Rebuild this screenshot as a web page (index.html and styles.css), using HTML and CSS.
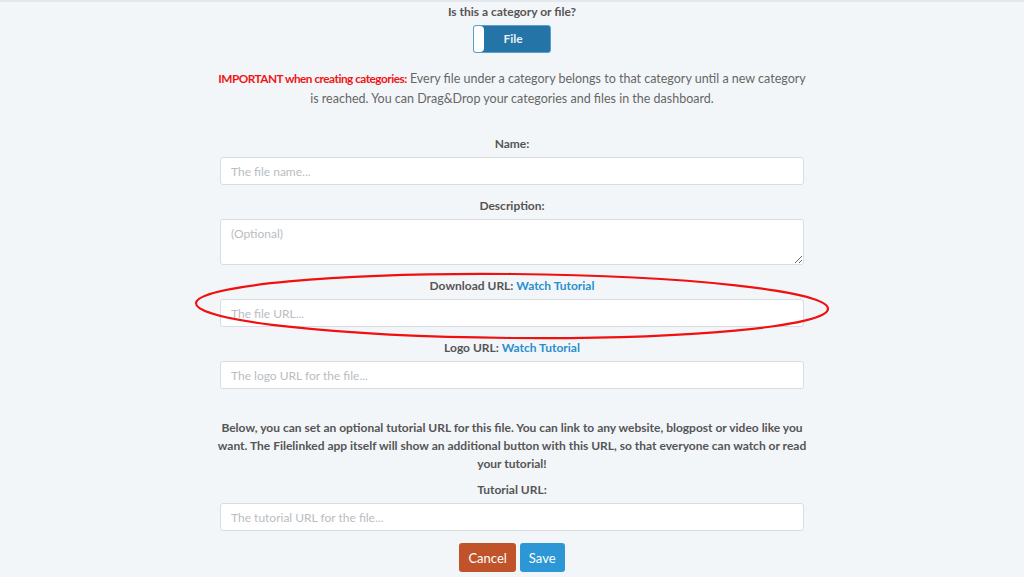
FILE: index.html
```html
<!DOCTYPE html>
<html lang="en">
<head>
    <meta charset="UTF-8">
    <meta name="viewport" content="width=device-width, initial-scale=1.0">
    <title>Edit File</title>
    <link rel="stylesheet" href="styles.css">
</head>
<body>

    <div class="topline"></div>

    <form class="file-form">
        <div class="field-label">Is this a category or file?</div>
        <div class="toggle-row">
            <button type="button" class="toggle">
                <span class="toggle-knob"></span>
                <span class="toggle-text">File</span>
            </button>
        </div>

        <p class="notice"><span class="notice-strong">IMPORTANT when creating categories:</span> Every file under a category belongs to that category until a new category<br>is reached. You can Drag&amp;Drop your categories and files in the dashboard.</p>

        <div class="form-group first">
            <label class="field-label">Name:</label>
            <input type="text" class="form-input" placeholder="The file name...">
        </div>

        <div class="form-group">
            <label class="field-label">Description:</label>
            <textarea class="form-input form-textarea" placeholder="(Optional)"></textarea>
        </div>

        <div class="form-group highlight">
            <label class="field-label">Download URL: <a href="#">Watch Tutorial</a></label>
            <input type="text" class="form-input" placeholder="The file URL...">
            <!-- red annotation ring -->
            <svg class="ring" width="640" height="72" viewBox="0 0 640 72">
                <ellipse cx="320" cy="36" rx="316" ry="32" fill="none" stroke="#f01010" stroke-width="2.2" transform="rotate(0.5 320 36)"/>
            </svg>
        </div>

        <div class="form-group">
            <label class="field-label">Logo URL: <a href="#">Watch Tutorial</a></label>
            <input type="text" class="form-input" placeholder="The logo URL for the file...">
        </div>

        <p class="info">
            Below, you can set an optional tutorial URL for this file. You can link to any website, blogpost or video like you
            want. The Filelinked app itself will show an additional button with this URL, so that everyone can watch or read
            your tutorial!
        </p>

        <div class="form-group tutorial">
            <label class="field-label">Tutorial URL:</label>
            <input type="text" class="form-input" placeholder="The tutorial URL for the file...">
        </div>

        <div class="actions">
            <button type="button" class="btn btn-cancel">Cancel</button>
            <button type="button" class="btn btn-save">Save</button>
        </div>
    </form>

</body>
</html>
```

FILE: styles.css
```css
body {
    font-family: Lato, "Open Sans", sans-serif;
    margin: 0;
    background-color: #f3f6f9;
    color: #555;
    font-size: 12px;
}
.topline {
    height: 2px;
    background-color: #e4e7ec;
}
.file-form {
    width: 584px;
    margin: 0 auto;
    padding-top: 1px;
    text-align: center;
}
.field-label {
    display: block;
    font-weight: 700;
    font-size: 12px;
    line-height: 18px;
    color: #555;
    margin-bottom: 4px;
}
.field-label a {
    color: #2a8fce;
    text-decoration: none;
}
.toggle-row {
    display: flex;
    justify-content: center;
}
.toggle {
    display: flex;
    align-items: stretch;
    width: 78px;
    height: 28px;
    padding: 0;
    border: 1px solid #5a9ecb;
    border-radius: 3px;
    background-color: #2474a7;
    cursor: pointer;
    font-family: inherit;
}
.toggle-knob {
    width: 10px;
    background-color: #fff;
    border-radius: 2px 4px 4px 2px;
}
.toggle-text {
    flex: 1;
    color: #e8f0f6;
    font-size: 12px;
    font-weight: 700;
    line-height: 26px;
    padding-right: 8px;
}
.notice {
    margin: 16px -10px 0;
    line-height: 20px;
    font-size: 12.5px;
    color: #666;
}
.notice-strong {
    color: #f01414;
    font-weight: 700;
    font-size: 11.8px;
    letter-spacing: -0.5px;
}
.form-group {
    margin-top: 12px;
}
.form-group.first {
    margin-top: 26px;
}
.form-input {
    display: block;
    box-sizing: border-box;
    width: 100%;
    height: 28px;
    padding: 0 10px;
    border: 1px solid #d9dde2;
    border-radius: 3px;
    background-color: #fff;
    font-family: inherit;
    font-size: 12px;
    color: #555;
}
.form-input::placeholder {
    color: #b9bdc2;
}
.form-textarea {
    height: 46px;
    padding-top: 6px;
    resize: vertical;
}
.highlight {
    position: relative;
}
.ring {
    position: absolute;
    left: -28px;
    top: -7px;
    pointer-events: none;
}
.info {
    margin: 30px -10px 0;
    line-height: 18px;
    font-weight: 700;
    color: #555;
}
.form-group.tutorial {
    margin-top: 8px;
}
.actions {
    display: flex;
    justify-content: center;
    gap: 4px;
    margin-top: 12px;
}
.btn {
    height: 29px;
    padding: 0 9px;
    border: none;
    border-radius: 3px;
    color: #fff;
    font-family: inherit;
    font-size: 13px;
    cursor: pointer;
}
.btn-cancel {
    background-color: #c0532a;
}
.btn-save {
    background-color: #2d97d6;
}
```
